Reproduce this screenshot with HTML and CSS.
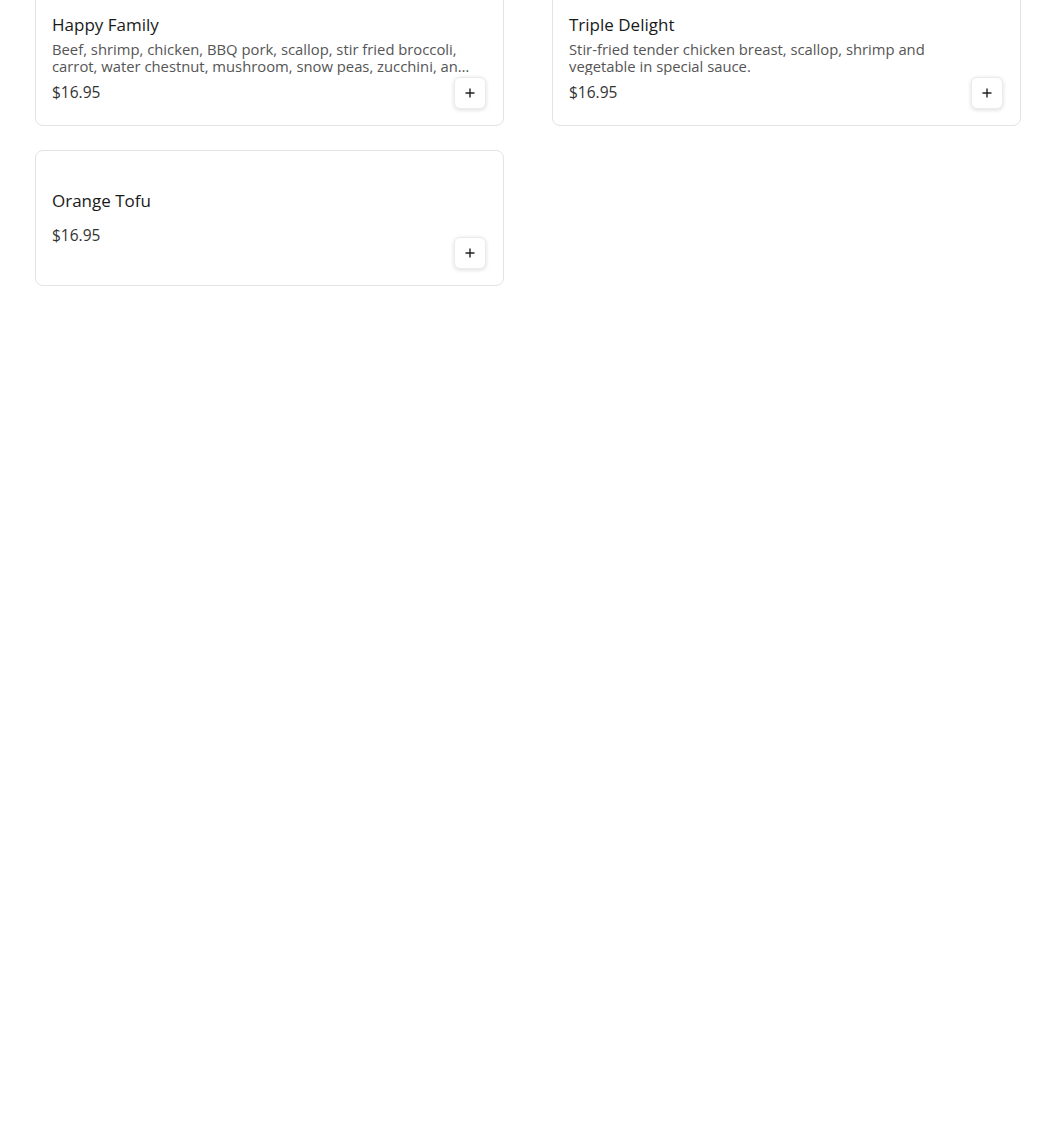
FILE: index.html
```html
<!DOCTYPE HTML>
<html>
<head>
 <title>Menu</title>
 <meta name="viewport" content="width=device-width, initial-scale=1">
 <link rel="stylesheet" href="styles.css">
</head>

<body>
<div class="menu-grid">

  <div class="menu-card">
    <div class="menu-info">
      <div class="item-name">Happy Family</div>
      <div class="item-desc">Beef, shrimp, chicken, BBQ pork, scallop, stir fried broccoli, carrot, water chestnut, mushroom, snow peas, zucchini, and baby corn in brown sauce.</div>
      <div class="item-price">$16.95</div>
    </div>
    <div class="add-button">
      <svg width="12" height="12" viewBox="0 0 12 12"><path d="M6 1.5v9M1.5 6h9" stroke="#222" stroke-width="1.4" fill="none"/></svg>
    </div>
  </div>

  <div class="menu-card">
    <div class="menu-info">
      <div class="item-name">Triple Delight</div>
      <div class="item-desc">Stir-fried tender chicken breast, scallop, shrimp and vegetable in special sauce.</div>
      <div class="item-price">$16.95</div>
    </div>
    <div class="add-button">
      <svg width="12" height="12" viewBox="0 0 12 12"><path d="M6 1.5v9M1.5 6h9" stroke="#222" stroke-width="1.4" fill="none"/></svg>
    </div>
  </div>

  <div class="menu-card">
    <div class="menu-info">
      <div class="item-name">Orange Tofu</div>
      <div class="item-price">$16.95</div>
    </div>
    <div class="add-button">
      <svg width="12" height="12" viewBox="0 0 12 12"><path d="M6 1.5v9M1.5 6h9" stroke="#222" stroke-width="1.4" fill="none"/></svg>
    </div>
  </div>

</div>
</body>
</html>
```

FILE: styles.css
```css
body{
 margin:0;
 background:#fff;
 font-family:"Open Sans", Arial, sans-serif;
 color:#222;
}

.menu-grid{
 display:grid;
 grid-template-columns:469px 469px;
 column-gap:48px;
 row-gap:24px;
 margin:-10px 0 0 35px;
}

.menu-card{
 position:relative;
 box-sizing:border-box;
 height:136px;
 border:1px solid #e3e3e3;
 border-radius:8px;
 padding:0 31px 0 16px;
 display:flex;
 align-items:center;
}

.menu-info{
 width:100%;
}

.item-name{
 font-size:17px;
 font-weight:500;
 line-height:20px;
 color:#1a1a1a;
}

.item-desc{
 margin-top:6px;
 font-size:14.8px;
 line-height:17px;
 color:#555;
 display:-webkit-box;
 -webkit-line-clamp:2;
 -webkit-box-orient:vertical;
 overflow:hidden;
}

.item-price{
 margin-top:7px;
 font-size:15.5px;
 line-height:20px;
 color:#333;
}

.menu-info .item-name + .item-price{
 margin-top:14px;
}

.add-button{
 position:absolute;
 right:17px;
 bottom:16px;
 width:32px;
 height:32px;
 box-sizing:border-box;
 border:1px solid #ececec;
 border-radius:6px;
 background:#fff;
 box-shadow:0 1px 4px rgba(0,0,0,0.14);
 display:flex;
 align-items:center;
 justify-content:center;
}
```
